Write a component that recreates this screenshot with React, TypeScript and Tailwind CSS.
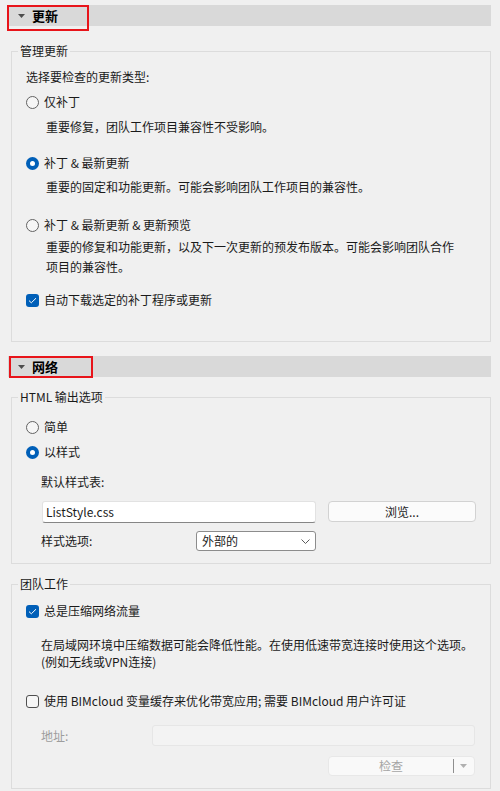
import React from "react";

type HeaderProps = {
  title: string;
  barTop: string;
  boxClass: string;
};

function SectionHeader({ title, barTop, boxClass }: HeaderProps) {
  return (
    <div className="relative">
      <div className={`ml-[8px] flex h-[21px] w-[483px] items-center bg-[#d9d9d9] ${barTop}`}>
        <svg width="7" height="4" viewBox="0 0 7 4" className="ml-[10px]">
          <path d="M0 0 L7 0 L3.5 4 Z" fill="#4d4d4d" />
        </svg>
        <span className="ml-[7px] text-[13px] font-bold leading-[16px] text-black">{title}</span>
      </div>
      <div className={`pointer-events-none absolute border-2 border-[#e8141a] ${boxClass}`} />
    </div>
  );
}

function Radio({ checked, label }: { checked?: boolean; label: string }) {
  return (
    <div className="flex h-[16px] items-center">
      {checked ? (
        <span className="flex h-[13px] w-[13px] items-center justify-center rounded-full bg-[#005fb8]">
          <span className="h-[5px] w-[5px] rounded-full bg-white" />
        </span>
      ) : (
        <span className="h-[13px] w-[13px] rounded-full border border-[#626262] bg-[#f6f6f6]" />
      )}
      <span className="ml-[5px] whitespace-nowrap">{label}</span>
    </div>
  );
}

function Check({ checked, label }: { checked?: boolean; label: string }) {
  return (
    <div className="flex h-[16px] items-center">
      {checked ? (
        <span className="flex h-[13px] w-[13px] items-center justify-center rounded-[3px] bg-[#005fb8]">
          <svg width="9" height="7" viewBox="0 0 9 7">
            <path d="M1 3.6 L3.3 5.8 L8 1.2" fill="none" stroke="#fff" strokeWidth="1" />
          </svg>
        </span>
      ) : (
        <span className="h-[13px] w-[13px] rounded-[3px] border border-[#4f4f4f] bg-[#f6f6f6]" />
      )}
      <span className="ml-[5px] whitespace-nowrap">{label}</span>
    </div>
  );
}

export default function App() {
  return (
    <div className="h-[791px] w-[500px] overflow-hidden bg-[#f0f0f0] pt-[1px] font-['Microsoft_YaHei_UI','Noto_Sans_CJK_SC',sans-serif] text-[12px] leading-[16px] text-[#1a1a1a]">
      <SectionHeader title="更新" barTop="mt-[4px]" boxClass="left-[7px] top-0 h-[26px] w-[82px]" />

      {/* 管理更新 */}
      <fieldset className="ml-[11px] mt-[17px] w-[480px] border border-[#dcdcdc] pb-[33px]">
        <legend className="ml-[6px] px-[2px] leading-[16px]">管理更新</legend>
        <div className="pl-[14px]">
          <div className="mt-[10px]">选择要检查的更新类型:</div>
          <div className="mt-[9px]">
            <Radio label="仅补丁" />
          </div>
          <div className="mt-[9px] pl-[20px]">重要修复，团队工作项目兼容性不受影响。</div>
          <div className="mt-[20px]">
            <Radio checked label="补丁 &amp; 最新更新" />
          </div>
          <div className="mt-[8px] pl-[20px]">重要的固定和功能更新。可能会影响团队工作项目的兼容性。</div>
          <div className="mt-[22px]">
            <Radio label="补丁 &amp; 最新更新 &amp; 更新预览" />
          </div>
          <div className="mt-[4px] whitespace-nowrap pl-[20px] leading-[20px]">
            重要的修复和功能更新，以及下一次更新的预发布版本。可能会影响团队合作
            <br />
            项目的兼容性。
          </div>
          <div className="mt-[15px]">
            <Check checked label="自动下载选定的补丁程序或更新" />
          </div>
        </div>
      </fieldset>

      <div className="mt-[14px]">
        <SectionHeader title="网络" barTop="mt-0" boxClass="left-[9px] top-0 h-[22px] w-[84px]" />
      </div>

      {/* HTML 输出选项 */}
      <fieldset className="ml-[11px] mt-[12px] w-[480px] border border-[#dcdcdc] pb-[12px]">
        <legend className="ml-[6px] px-[2px] leading-[16px]">HTML 输出选项</legend>
        <div className="pl-[14px]">
          <div className="mt-[14px]">
            <Radio label="简单" />
          </div>
          <div className="mt-[9px]">
            <Radio checked label="以样式" />
          </div>
          <div className="mt-[14px] pl-[15px]">默认样式表:</div>
          <div className="mt-[11px] flex pl-[16px]">
            <div className="flex h-[22px] w-[274px] items-center rounded-[3px] border border-[#e2e2e2] border-b-[#868686] bg-white pl-[3px]">
              ListStyle.css
            </div>
            <button className="ml-[12px] flex h-[21px] w-[148px] items-center justify-center rounded-[4px] border border-[#d2d2d2] bg-[#fbfbfb]">
              浏览...
            </button>
          </div>
          <div className="mt-[8px] flex items-center pl-[15px]">
            <span className="w-[155px]">样式选项:</span>
            <div className="flex h-[20px] w-[120px] items-center justify-between rounded-[3px] border border-[#8c8c8c] bg-white pl-[5px] pr-[5px]">
              <span>外部的</span>
              <svg width="9" height="5" viewBox="0 0 9 5">
                <path d="M0.5 0.5 L4.5 4.5 L8.5 0.5" fill="none" stroke="#5a5a5a" strokeWidth="1" />
              </svg>
            </div>
          </div>
        </div>
      </fieldset>

      {/* 团队工作 */}
      <fieldset className="ml-[11px] mt-[12px] w-[480px] border border-[#dcdcdc] pb-[12px]">
        <legend className="ml-[6px] px-[2px] leading-[16px]">团队工作</legend>
        <div className="pl-[14px]">
          <div className="mt-[11px]">
            <Check checked label="总是压缩网络流量" />
          </div>
          <div className="mt-[17px] whitespace-nowrap pl-[15px] leading-[17px]">
            在局域网环境中压缩数据可能会降低性能。在使用低速带宽连接时使用这个选项。
            <br />
            (例如无线或VPN连接)
          </div>
          <div className="mt-[23px]">
            <Check label="使用 BIMcloud 变量缓存来优化带宽应用; 需要 BIMcloud 用户许可证" />
          </div>
          <div className="mt-[16px] flex items-center pl-[15px]">
            <span className="w-[111px] text-[#9d9d9d]">地址:</span>
            <div className="h-[21px] w-[323px] rounded-[3px] border border-[#e6e6e6] bg-[#f3f3f3]" />
          </div>
          <div className="mt-[10px] flex pl-[302px]">
            <div className="flex h-[20px] w-[147px] items-center rounded-[4px] border border-[#e8e8e8] bg-[#f9f9f9] text-[#a5a5a5]">
              <span className="flex-1 text-center">检查</span>
              <span className="h-[14px] w-px bg-[#8f8f8f]" />
              <svg width="20" height="4" viewBox="0 0 20 4">
                <path d="M6 0 L13 0 L9.5 4 Z" fill="#b0b0b0" />
              </svg>
            </div>
          </div>
        </div>
      </fieldset>
    </div>
  );
}
